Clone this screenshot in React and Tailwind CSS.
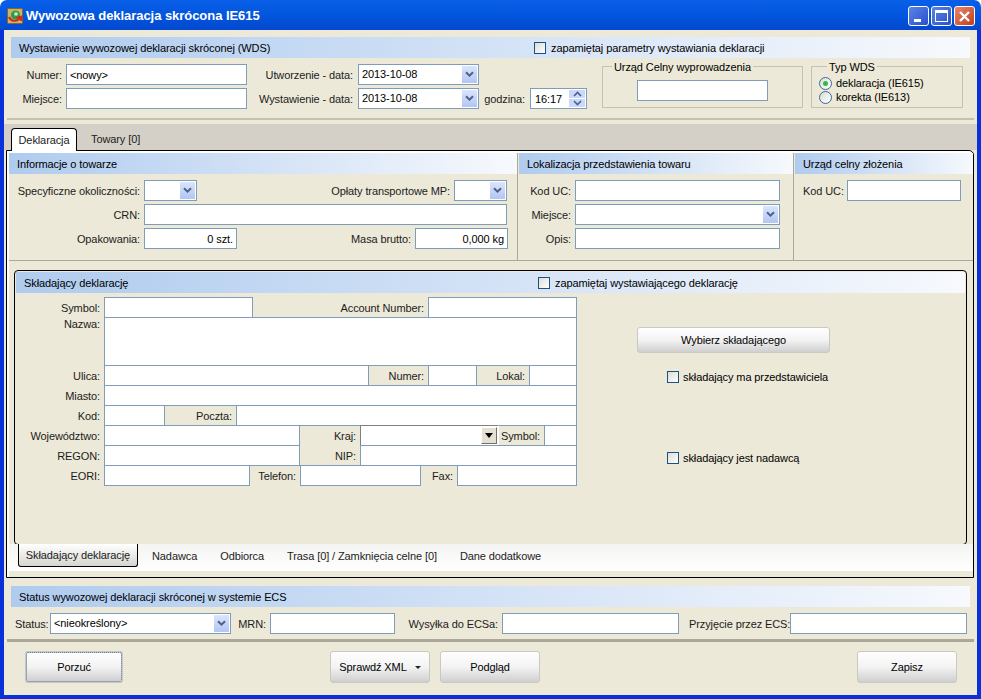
import React from "react";

const Input = ({ className = "", children }) => (
  <div className={"shrink-0 border border-[#7f9db9] bg-white flex items-center px-[3px] text-black " + className}>{children}</div>
);

const Chevron = ({ className = "" }) => (
  <div className={"shrink-0 w-[15px] bg-linear-to-b from-[#dbe5fc] to-[#b2c5f4] flex items-center justify-center " + className}>
    <svg width="9" height="7" viewBox="0 0 9 7"><path d="M1 1.2 L4.5 4.7 L8 1.2" fill="none" stroke="#4d6185" strokeWidth="2" /></svg>
  </div>
);

const Combo = ({ className = "", children }) => (
  <div className={"shrink-0 border border-[#7f9db9] bg-white flex items-stretch p-px text-black " + className}>
    <div className="flex-1 flex items-center pl-[2px] pb-[2px] whitespace-nowrap overflow-hidden">{children}</div>
    <Chevron />
  </div>
);

const Label = ({ className = "", children }) => (
  <div className={"shrink-0 text-right whitespace-nowrap text-[#1c1c1c] " + className}>{children}</div>
);

const Check = ({ className = "" }) => (
  <div className={"shrink-0 w-[12px] h-[12px] border border-[#1c5180] bg-linear-to-br from-[#dcdcd7] to-white " + className} />
);

const Radio = ({ on }) => (
  <div className="shrink-0 w-[13px] h-[13px] rounded-full border border-[#3a6a94] bg-linear-to-br from-[#dcdcd7] to-white flex items-center justify-center">
    {on ? <div className="w-[5px] h-[5px] rounded-full bg-[#35b84a]" /> : null}
  </div>
);

const Header = ({ className = "", children }) => (
  <div className={"h-[21px] shrink-0 bg-linear-to-r from-[#afcbee] to-[#f7f9fd] flex items-center " + className}>{children}</div>
);

const Btn = ({ className = "", children }) => (
  <div className={"shrink-0 h-[32px] rounded-[3px] border border-[#c9c9c4] bg-linear-to-b from-white via-[#f3f3f3] to-[#cfcfcf] flex items-center justify-center text-black " + className}>{children}</div>
);

const Row = ({ children, className = "h-[21px]" }) => (
  <div className={"flex items-stretch -mt-px " + className}>{children}</div>
);

const F = ({ w, h = "" }) => <div className={"shrink-0 border border-[#7f9db9] bg-white " + w + " " + h} />;

const L = ({ w, children, top }) => (
  <div className={"shrink-0 flex justify-end pr-[4px] whitespace-nowrap text-[#1c1c1c] " + w + (top ? " items-start" : " items-center")}>{children}</div>
);

export default function App() {
  return (
    <div className="w-[981px] h-[699px] flex flex-col overflow-hidden bg-white text-[11px] leading-[14px] tracking-[-0.1px] font-['Liberation_Sans',sans-serif]">
      {/* title bar */}
      <div className="h-[30px] shrink-0 rounded-t-[7px] bg-linear-to-b from-[#0a5fe8] via-[#0356de] to-[#0348cf] flex items-center pl-[7px] pr-[6px] pt-[2px]">
        <svg width="16" height="16" viewBox="0 0 16 16" className="shrink-0">
          <rect x="0.5" y="0.5" width="15" height="15" rx="1" fill="#c9b56f" stroke="#7d6a2a" />
          <circle cx="8.5" cy="7" r="4.6" fill="#2f9e44" />
          <circle cx="9" cy="6" r="1.8" fill="#d8f0c8" />
          <path d="M2 9 C4 13.5 9 14 13 10.5 L11 9.5 L14.5 8.5 L14 13" fill="none" stroke="#d8261c" strokeWidth="2" />
        </svg>
        <div className="ml-[3px] text-white font-bold text-[13px] tracking-[-0.05px] font-['Liberation_Sans',sans-serif]">Wywozowa deklaracja skrócona IE615</div>
        <div className="ml-auto flex gap-[2px]">
          <div className="w-[21px] h-[20px] rounded-[3px] border border-white bg-linear-to-br from-[#5b83ea] to-[#2a50c8] flex items-end pl-[5px] pb-[3px]">
            <div className="w-[7px] h-[3px] bg-white" />
          </div>
          <div className="w-[21px] h-[20px] rounded-[3px] border border-white bg-linear-to-br from-[#5b83ea] to-[#2a50c8] flex items-center justify-center">
            <div className="w-[13px] h-[12px] border border-white border-t-[3px]" />
          </div>
          <div className="w-[21px] h-[20px] rounded-[3px] border border-white bg-linear-to-br from-[#e8866a] to-[#c4391c] flex items-center justify-center">
            <svg width="13" height="13" viewBox="0 0 13 13"><path d="M2 2 L11 11 M11 2 L2 11" stroke="#fff" strokeWidth="2.4" /></svg>
          </div>
        </div>
      </div>

      {/* window body */}
      <div className="flex-1 flex flex-col border-x-4 border-b-4 border-[#0831d9] bg-[#ece9d8] min-h-0">
        {/* section 1 */}
        <div className="h-[90px] shrink-0 mx-[3px] border-b-2 border-[#c5c2b2] pl-[4px]">
          <Header className="w-[959px] mt-[7px] pl-[8px]">
            <div className="w-[515px]">Wystawienie wywozowej deklaracji skróconej (WDS)</div>
            <Check />
            <div className="ml-[5px]">zapamiętaj parametry wystawiania deklaracji</div>
          </Header>
          <div className="flex items-start">
            <div className="w-[236px] shrink-0 flex flex-col gap-[3px] pt-[6px]">
              <div className="flex justify-end items-center gap-[4px]">
                <Label>Numer:</Label>
                <Input className="w-[181px] h-[21px]">&lt;nowy&gt;</Input>
              </div>
              <div className="flex justify-end items-center gap-[4px]">
                <Label>Miejsce:</Label>
                <Input className="w-[181px] h-[21px]" />
              </div>
            </div>
            <div className="w-[232px] shrink-0 flex flex-col gap-[3px] pt-[6px]">
              <div className="flex justify-end items-center gap-[5px]">
                <Label>Utworzenie - data:</Label>
                <Combo className="w-[121px] h-[21px]">2013-10-08</Combo>
              </div>
              <div className="flex justify-end items-center gap-[5px]">
                <Label>Wystawienie - data:</Label>
                <Combo className="w-[121px] h-[21px]">2013-10-08</Combo>
              </div>
            </div>
            <div className="w-[108px] shrink-0 pt-[30px] flex justify-end items-center gap-[5px]">
              <Label>godzina:</Label>
              <div className="w-[57px] h-[21px] shrink-0 border border-[#7f9db9] bg-white flex items-stretch p-px">
                <div className="flex-1 pl-[3px] flex items-center">16:17</div>
                <div className="w-[16px] flex flex-col gap-px">
                  <div className="flex-1 bg-[#c9d8fb] flex items-center justify-center">
                    <svg width="9" height="6" viewBox="0 0 9 6"><path d="M1 5 L4.5 1.5 L8 5" fill="none" stroke="#4d6185" strokeWidth="1.6" /></svg>
                  </div>
                  <div className="flex-1 bg-[#c9d8fb] flex items-center justify-center">
                    <svg width="9" height="6" viewBox="0 0 9 6"><path d="M1 1 L4.5 4.5 L8 1" fill="none" stroke="#4d6185" strokeWidth="1.6" /></svg>
                  </div>
                </div>
              </div>
            </div>
            <fieldset className="ml-[15px] w-[201px] h-[50px] shrink-0 border border-[#c5c2b2] px-[34px] min-w-0">
              <legend className="-ml-[25px] px-[2px] h-[16px] pt-[2px] whitespace-nowrap">Urząd Celny wyprowadzenia</legend>
              <Input className="w-[131px] h-[21px] mt-[6px]" />
            </fieldset>
            <fieldset className="ml-[8px] w-[152px] h-[50px] shrink-0 border border-[#c5c2b2] pl-[7px] min-w-0">
              <legend className="ml-[8px] px-[2px] h-[16px] pt-[2px] whitespace-nowrap">Typ WDS</legend>
              <div className="flex items-center gap-[4px] h-[14px] mt-[2px]"><Radio on /><span>deklaracja (IE615)</span></div>
              <div className="flex items-center gap-[4px] h-[14px]"><Radio /><span>korekta (IE613)</span></div>
            </fieldset>
          </div>
        </div>

        {/* main tabs */}
        <div className="h-[26px] shrink-0 mt-[4px] bg-[#d4d0c8] flex items-end pl-[7px] text-[#1c1c1c]">
          <div className="w-[66px] h-[23px] -mb-px z-10 bg-white border border-b-0 border-black rounded-t-[4px] flex items-center justify-center">Deklaracja</div>
          <div className="ml-[14px] h-[23px] flex items-center">Towary [0]</div>
        </div>

        {/* tab page */}
        <div className="h-[428px] shrink-0 ml-[2px] w-[968px] border border-black rounded-tr-[5px] bg-white flex flex-col pt-[2px]">
          <div className="h-[425px] bg-[#ece9d8] flex flex-col ml-[2px]">
            {/* upper panels */}
            <div className="h-[108px] shrink-0 flex border-b border-[#aca899]">
              <div className="w-[509px] shrink-0 border-r border-[#aca899] flex flex-col">
                <Header className="pl-[8px]">Informacje o towarze</Header>
                <div className="flex items-center h-[21px] mt-[6px]">
                  <Label className="w-[131px]">Specyficzne okoliczności:</Label>
                  <Combo className="ml-[4px] w-[53px] h-[21px]" />
                  <Label className="w-[253px]">Opłaty transportowe MP:</Label>
                  <Combo className="ml-[4px] w-[53px] h-[21px]" />
                </div>
                <div className="flex items-center h-[21px] mt-[3px]">
                  <Label className="w-[131px]">CRN:</Label>
                  <Input className="ml-[4px] w-[363px] h-[21px]" />
                </div>
                <div className="flex items-center h-[21px] mt-[3px]">
                  <Label className="w-[131px]">Opakowania:</Label>
                  <Input className="ml-[4px] w-[93px] h-[21px] justify-end">0 szt.</Input>
                  <Label className="w-[174px]">Masa brutto:</Label>
                  <Input className="ml-[4px] w-[93px] h-[21px] justify-end">0,000 kg</Input>
                </div>
              </div>
              <div className="w-[276px] shrink-0 border-r border-[#aca899] flex flex-col pl-[1px]">
                <Header className="pl-[8px]">Lokalizacja przedstawienia towaru</Header>
                <div className="flex items-center h-[21px] mt-[6px]">
                  <Label className="w-[52px]">Kod UC:</Label>
                  <Input className="ml-[4px] w-[205px] h-[21px]" />
                </div>
                <div className="flex items-center h-[21px] mt-[3px]">
                  <Label className="w-[52px]">Miejsce:</Label>
                  <Combo className="ml-[4px] w-[205px] h-[21px]" />
                </div>
                <div className="flex items-center h-[21px] mt-[3px]">
                  <Label className="w-[52px]">Opis:</Label>
                  <Input className="ml-[4px] w-[205px] h-[21px]" />
                </div>
              </div>
              <div className="flex-1 flex flex-col pl-[1px] min-w-0">
                <Header className="pl-[8px]">Urząd celny złożenia</Header>
                <div className="flex items-center h-[21px] mt-[6px] pl-[8px]">
                  <Label className="w-[40px]">Kod UC:</Label>
                  <Input className="ml-[4px] w-[114px] h-[21px]" />
                </div>
              </div>
            </div>

            {/* inner panel */}
            <div className="h-[275px] shrink-0 mt-[9px] ml-[5px] w-[953px] border border-black rounded-[4px] flex flex-col p-px">
              <Header className="pl-[8px]">
                <div className="w-[514px] shrink-0">Składający deklarację</div>
                <Check />
                <div className="ml-[5px]">zapamiętaj wystawiającego deklarację</div>
              </Header>
              <div className="flex items-start mt-[4px]">
                <div className="w-[562px] shrink-0 pt-px">
                  <Row><L w="w-[88px]">Symbol:</L><F w="w-[149px]" /><L w="w-[175px]">Account Number:</L><F w="w-[149px]" /></Row>
                  <Row className="h-[49px]"><L w="w-[88px]" top>Nazwa:</L><F w="w-[473px]" /></Row>
                  <Row><L w="w-[88px]">Ulica:</L><F w="w-[265px]" /><L w="w-[59px]">Numer:</L><F w="w-[49px]" /><L w="w-[52px]">Lokal:</L><F w="w-[48px]" /></Row>
                  <Row><L w="w-[88px]">Miasto:</L><F w="w-[473px]" /></Row>
                  <Row><L w="w-[88px]">Kod:</L><F w="w-[61px]" /><L w="w-[71px]">Poczta:</L><F w="w-[341px]" /></Row>
                  <Row>
                    <L w="w-[88px]">Województwo:</L><F w="w-[196px]" /><L w="w-[60px]">Kraj:</L>
                    <div className="w-[139px] shrink-0 border border-t-[#808080] border-l-[#808080] border-r-white border-b-white bg-white flex justify-end items-stretch p-px">
                      <div className="w-[16px] bg-[#e4e1d4] border border-t-white border-l-white border-r-[#716f64] border-b-[#716f64] flex items-center justify-center">
                        <svg width="8" height="5" viewBox="0 0 8 5"><path d="M0 0 H8 L4 5 Z" fill="#000" /></svg>
                      </div>
                    </div>
                    <L w="w-[45px]">Symbol:</L><F w="w-[33px]" />
                  </Row>
                  <Row><L w="w-[88px]">REGON:</L><F w="w-[196px]" /><L w="w-[60px]">NIP:</L><F w="w-[217px]" /></Row>
                  <Row><L w="w-[88px]">EORI:</L><F w="w-[146px]" /><L w="w-[50px]">Telefon:</L><F w="w-[121px]" /><L w="w-[36px]">Fax:</L><F w="w-[120px]" /></Row>
                </div>
                <div className="flex flex-col pl-[59px]">
                  <div className="mt-[30px] w-[193px] h-[26px] rounded-[3px] border border-[#c9c9c4] bg-linear-to-b from-white via-[#f3f3f3] to-[#cfcfcf] flex items-center justify-center text-black">Wybierz składającego</div>
                  <div className="flex items-center mt-[17px] ml-[30px]"><Check /><span className="ml-[4px] whitespace-nowrap">składający ma przedstawiciela</span></div>
                  <div className="flex items-center mt-[67px] ml-[30px]"><Check /><span className="ml-[4px] whitespace-nowrap">składający jest nadawcą</span></div>
                </div>
              </div>
            </div>

            {/* lower tabs */}
            <div className="h-[27px] shrink-0 bg-linear-to-b from-[#f4f4f2] to-white flex items-start pl-[9px] -mt-[1px] text-[#1c1c1c]">
              <div className="w-[120px] h-[23px] border border-t-0 border-black rounded-b-[3px] bg-linear-to-b from-white to-[#d6d6d0] flex items-center justify-center">Składający deklarację</div>
              <div className="ml-[14px] h-[23px] flex items-center">Nadawca</div>
              <div className="ml-[23px] h-[23px] flex items-center">Odbiorca</div>
              <div className="ml-[23px] h-[23px] flex items-center">Trasa [0] / Zamknięcia celne [0]</div>
              <div className="ml-[23px] h-[23px] flex items-center">Dane dodatkowe</div>
            </div>
          </div>
        </div>

        {/* status */}
        <div className="h-[64px] shrink-0 mx-[3px] border-b-[3px] border-[#aca899] pl-[4px]">
          <Header className="w-[959px] mt-[8px] pl-[8px]">Status wywozowej deklaracji skróconej w systemie ECS</Header>
          <div className="flex items-center mt-[6px] pl-[4px]">
            <Label className="w-[32px]">Status:</Label>
            <Combo className="ml-[3px] w-[181px] h-[21px]">&lt;nieokreślony&gt;</Combo>
            <Label className="ml-[7px] w-[28px]">MRN:</Label>
            <Input className="ml-[4px] w-[125px] h-[21px]" />
            <Label className="ml-[13px] w-[90px]">Wysyłka do ECSa:</Label>
            <Input className="ml-[4px] w-[177px] h-[21px]" />
            <Label className="ml-[10px] w-[96px]">Przyjęcie przez ECS:</Label>
            <Input className="ml-[5px] w-[177px] h-[21px]" />
          </div>
        </div>

        {/* buttons */}
        <div className="flex items-start pt-[9px] pl-[21px]">
          <Btn className="w-[98px] border-2 border-[#a9b8da] outline-1 outline-dotted -outline-offset-2 outline-[#6a7aa5]">Porzuć</Btn>
          <Btn className="ml-[207px] w-[100px]">
            <span>Sprawdź XML</span>
            <svg width="6" height="3" viewBox="0 0 6 3" className="ml-[8px]"><path d="M0 0 H6 L3 3 Z" fill="#222" /></svg>
          </Btn>
          <Btn className="ml-[10px] w-[100px]">Podgląd</Btn>
          <Btn className="ml-[317px] w-[100px]">Zapisz</Btn>
        </div>
      </div>
    </div>
  );
}
